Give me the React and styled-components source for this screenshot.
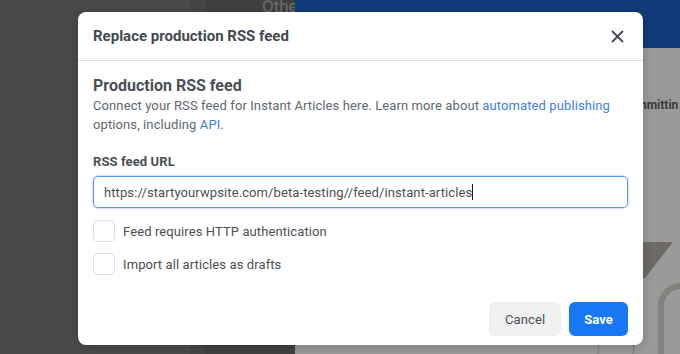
import React from "react";
import styled, { createGlobalStyle } from "styled-components";

const GlobalStyle = createGlobalStyle`
  html, body {
    margin: 0;
    padding: 0;
    width: 680px;
    height: 354px;
    overflow: hidden;
    font-family: Roboto, "Liberation Sans", sans-serif;
  }
`;

const Page = styled.div`
  position: relative;
  display: flex;
  width: 680px;
  height: 354px;
  overflow: hidden;
`;

const LeftPane = styled.div`
  width: 190px;
  background: #4a4a4a;
`;

const Strip = styled.div`
  width: 15px;
  background: #464646;
`;

const MiddlePane = styled.div`
  width: 90px;
  box-sizing: border-box;
  padding-left: 57px;
  background: #414141;
  color: #6e6e6e;
  font-size: 17px;
  line-height: 20px;
  white-space: nowrap;
  overflow: hidden;
`;

const MiddleText = styled.div`
  margin-top: -4px;
`;

const RightPane = styled.div`
  flex: 1;
  display: flex;
  flex-direction: column;
  background: #9a9a9a;
`;

const BlueBand = styled.div`
  height: 48px;
  background: #0f3b7a;
`;

const GrayArea = styled.div`
  position: relative;
  flex: 1;
  color: #3a3a3a;
  font-size: 12px;
  font-weight: 700;
`;

const StrayText = styled.div`
  position: absolute;
  left: 345px;
  top: 50px;
`;

const Backdrop = styled.svg`
  position: absolute;
  left: 0;
  top: 0;
`;

const Dialog = styled.div`
  position: absolute;
  left: 78px;
  top: 12px;
  width: 565px;
  height: 333px;
  background: #fff;
  border-radius: 8px;
  display: flex;
  flex-direction: column;
  box-shadow: 0 2px 12px rgba(0, 0, 0, 0.2);
`;

const Header = styled.div`
  height: 48px;
  display: flex;
  align-items: center;
  justify-content: space-between;
  padding: 0 15px;
  border-bottom: 1px solid #dddfe2;
`;

const Title = styled.h1`
  margin: 0;
  font-size: 15px;
  font-weight: 700;
  color: #444950;
`;

const CloseButton = styled.button`
  border: 0;
  background: none;
  padding: 0;
  width: 14px;
  height: 14px;
  display: flex;
  align-items: center;
  justify-content: center;
  margin-right: 4px;
`;

const Body = styled.div`
  flex: 1;
  padding: 15px 15px 0;
  display: flex;
  flex-direction: column;
  letter-spacing: 0.1px;
`;

const SectionTitle = styled.h2`
  margin: 0;
  font-size: 16px;
  font-weight: 700;
  color: #4b4f56;
  line-height: 20px;
  letter-spacing: 0;
`;

const Description = styled.p`
  margin: 0;
  font-size: 13px;
  line-height: 19px;
  color: #606770;
`;

const Link = styled.a`
  color: #4080e0;
  text-decoration: none;
`;

const Label = styled.label`
  margin-top: 20px;
  font-size: 13px;
  font-weight: 700;
  color: #4b4f56;
  line-height: 16px;
`;

const Input = styled.div`
  margin-top: 6px;
  height: 32px;
  box-sizing: border-box;
  border: 1px solid #5b93ef;
  border-radius: 5px;
  box-shadow: 0 0 0 1px rgba(91, 147, 239, 0.25);
  display: flex;
  align-items: center;
  padding: 0 10px;
  font-size: 13px;
  color: #4b4f56;
`;

const Caret = styled.span`
  display: inline-block;
  width: 1px;
  height: 16px;
  background: #1c1e21;
  vertical-align: middle;
`;

const CheckRow = styled.div`
  display: flex;
  align-items: center;
  gap: 8px;
  margin-top: ${(p) => p.$top}px;
  font-size: 13px;
  color: #4b4f56;
`;

const Box = styled.span`
  width: 22px;
  height: 22px;
  box-sizing: border-box;
  border: 1px solid #dadde1;
  border-radius: 5px;
  background: #fff;
`;

const Footer = styled.div`
  display: flex;
  justify-content: flex-end;
  gap: 8px;
  padding: 0 15px 9px;
`;

const Button = styled.button`
  height: 34px;
  padding: 0 ${(p) => (p.$primary ? 15 : 16)}px;
  border: 0;
  border-radius: 6px;
  font-family: Roboto, "Liberation Sans", sans-serif;
  font-size: 13px;
  letter-spacing: 0.1px;
  font-weight: ${(p) => (p.$primary ? 700 : 400)};
  background: ${(p) => (p.$primary ? "#1877f2" : "#f0f0f0")};
  color: ${(p) => (p.$primary ? "#fff" : "#4b4f56")};
`;

export default function App() {
  return (
    <>
      <GlobalStyle />
      <Page>
        <LeftPane />
        <Strip />
        <MiddlePane>
          <MiddleText>Other</MiddleText>
        </MiddlePane>
        <RightPane>
          <BlueBand />
          <GrayArea>
            <StrayText>hmittin</StrayText>
            <Backdrop width="385" height="306" viewBox="0 0 385 306">
              <polygon points="345,194 378,194 350,230 345,230" fill="#6e6a66" />
              <path
                d="M366 306 V258 a20 20 0 0 1 20 -20"
                fill="none"
                stroke="#85817d"
                strokeWidth="6"
              />
              <line x1="305" y1="290" x2="303" y2="306" stroke="#7a7774" strokeWidth="1" />
              <line x1="340" y1="290" x2="338" y2="306" stroke="#7a7774" strokeWidth="1" />
            </Backdrop>
          </GrayArea>
        </RightPane>

        <Dialog>
          <Header>
            <Title>Replace production RSS feed</Title>
            <CloseButton aria-label="Close">
              <svg width="13" height="13" viewBox="0 0 13 13">
                <path d="M1 1 L12 12 M12 1 L1 12" stroke="#444950" strokeWidth="1.8" />
              </svg>
            </CloseButton>
          </Header>
          <Body>
            <SectionTitle>Production RSS feed</SectionTitle>
            <Description>
              Connect your RSS feed for Instant Articles here. Learn more about{" "}
              <Link>automated publishing</Link> options, including <Link>API</Link>.
            </Description>
            <Label>RSS feed URL</Label>
            <Input>
              https://startyourwpsite.com/beta-testing//feed/instant-articles
              <Caret />
            </Input>
            <CheckRow $top={12}>
              <Box />
              Feed requires HTTP authentication
            </CheckRow>
            <CheckRow $top={11}>
              <Box />
              Import all articles as drafts
            </CheckRow>
          </Body>
          <Footer>
            <Button>Cancel</Button>
            <Button $primary>Save</Button>
          </Footer>
        </Dialog>
      </Page>
    </>
  );
}
